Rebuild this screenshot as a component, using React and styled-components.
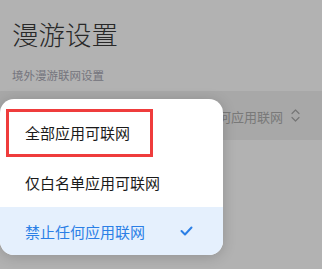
import React from "react";
import styled, { createGlobalStyle } from "styled-components";

const Global = createGlobalStyle`
  html, body { margin: 0; padding: 0; width: 322px; height: 269px; overflow: hidden; background: #fff; }
  body { font-family: "Noto Sans CJK SC", "Noto Sans", sans-serif; }
  * { box-sizing: border-box; }
`;

const Page = styled.div`
  position: relative;
  width: 322px;
  height: 269px;
  background: #fff;
  overflow: hidden;
`;

const Header = styled.div`
  padding: 14px 0 0 12px;
`;

const Title = styled.h1`
  margin: 0;
  font-size: 26.5px;
  line-height: 40px;
  font-weight: 200;
  color: #3a3a3a;
  letter-spacing: 0;
`;

const Subtitle = styled.div`
  margin-top: 13px;
  font-size: 11.5px;
  line-height: 16px;
  color: #a8a8b4;
`;

const SettingRow = styled.div`
  margin-top: 8px;
  height: 49px;
  background: #f1f1f1;
  display: flex;
  align-items: center;
  justify-content: flex-end;
  padding-right: 22px;
  gap: 8px;
`;

const Value = styled.span`
  font-size: 13px;
  color: #aeaeae;
  margin-top: 2px;
`;

const Backdrop = styled.div`
  position: absolute;
  inset: 0;
  background: rgba(0, 0, 0, 0.3);
`;

const Menu = styled.div`
  position: absolute;
  left: 0;
  top: 99px;
  width: 223px;
  background: #fff;
  border-radius: 14px;
  overflow: hidden;
  padding-top: 8px;
  box-shadow: 0 2px 14px rgba(0, 0, 0, 0.18);
`;

const Item = styled.div`
  height: ${(p) => (p.$last ? 48 : 50)}px;
  display: flex;
  align-items: center;
  justify-content: space-between;
  padding: 0 30px 0 25px;
  font-size: 15px;
  color: ${(p) => (p.$active ? "#2b7fe6" : "#1a1a1a")};
  background: ${(p) => (p.$active ? "#e5f0fd" : "transparent")};
`;

const Highlight = styled.div`
  position: absolute;
  left: 6px;
  top: 109px;
  width: 147px;
  height: 48px;
  border: 3px solid #ef3c3c;
`;

const Chevron = () => (
  <svg width="9" height="15" viewBox="0 0 9 15" fill="none" stroke="#a9a9a9" strokeWidth="1.2" strokeLinecap="round" strokeLinejoin="round">
    <polyline points="1,5.5 4.5,2 8,5.5" />
    <polyline points="1,9.5 4.5,13 8,9.5" />
  </svg>
);

const Check = () => (
  <svg width="13" height="10" viewBox="0 0 13 10" fill="none" stroke="#2b7fe6" strokeWidth="2" strokeLinecap="round" strokeLinejoin="round">
    <polyline points="1.5,5 5,8.5 11.5,1.5" />
  </svg>
);

export default function App() {
  return (
    <Page>
      <Global />
      <Header>
        <Title>漫游设置</Title>
        <Subtitle>境外漫游联网设置</Subtitle>
      </Header>
      <SettingRow>
        <Value>禁止任何应用联网</Value>
        <Chevron />
      </SettingRow>
      <Backdrop />
      <Menu>
        <Item>全部应用可联网</Item>
        <Item>仅白名单应用可联网</Item>
        <Item $active $last>
          禁止任何应用联网
          <Check />
        </Item>
      </Menu>
      <Highlight />
    </Page>
  );
}
